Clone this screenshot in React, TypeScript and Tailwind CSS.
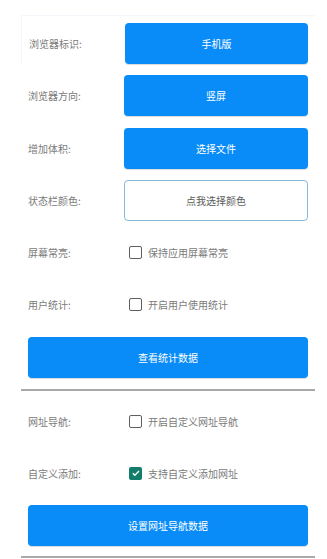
import { useState } from 'react'

const font = { fontFamily: '"Noto Sans CJK SC", "Noto Sans", sans-serif' }

function Label({ text }: { text: string }) {
  return <div className="w-[103px] shrink-0 pl-[7px] text-[10px] text-[#7a7a7a]">{text}</div>
}

function Btn({ text }: { text: string }) {
  return (
    <button className="h-[41px] flex-1 rounded-[4px] bg-[#0a8cf8] text-[10px] text-white shadow-[0_1px_1px_rgba(0,0,0,0.15)]">
      {text}
    </button>
  )
}

function Check({ text, on, toggle }: { text: string; on: boolean; toggle: () => void }) {
  return (
    <label className="ml-[5px] flex cursor-pointer items-center gap-[6px] text-[10px] text-[#7a7a7a]" onClick={toggle}>
      {on ? (
        <span className="flex h-[13px] w-[13px] items-center justify-center rounded-[2px] bg-[#137d6b]">
          <svg viewBox="0 0 12 12" className="h-[10px] w-[10px]">
            <path d="M2.2 6.2l2.4 2.4 5-5" fill="none" stroke="white" strokeWidth="1.7" />
          </svg>
        </span>
      ) : (
        <span className="h-[13px] w-[13px] rounded-[2px] border-[1.5px] border-[#5f5f5f]" />
      )}
      {text}
    </label>
  )
}

function Row({ children }: { children: React.ReactNode }) {
  return <div className="flex h-[41px] items-center pr-[7px]">{children}</div>
}

export default function App() {
  const [keepOn, setKeepOn] = useState(false)
  const [stats, setStats] = useState(false)
  const [nav, setNav] = useState(false)
  const [custom, setCustom] = useState(true)

  return (
    <div className="min-h-[559px] bg-white pl-[21px] pr-[12px] pt-[15px]" style={font}>
      <div className="flex flex-col gap-[11.3px] border-t border-[#f2f6fa]">
        <div className="border-l border-[#f2f6fa] pt-[7px]">
          <Row>
            <Label text="浏览器标识:" />
            <Btn text="手机版" />
          </Row>
        </div>
        <Row>
          <Label text="浏览器方向:" />
          <Btn text="竖屏" />
        </Row>
        <Row>
          <Label text="增加体积:" />
          <Btn text="选择文件" />
        </Row>
        <Row>
          <Label text="状态栏颜色:" />
          <button className="h-[41px] flex-1 rounded-[4px] border border-[#86b9d8] bg-white text-[10px] text-[#5a5a5a]">
            点我选择颜色
          </button>
        </Row>
        <Row>
          <Label text="屏幕常亮:" />
          <Check text="保持应用屏幕常亮" on={keepOn} toggle={() => setKeepOn(!keepOn)} />
        </Row>
        <Row>
          <Label text="用户统计:" />
          <Check text="开启用户使用统计" on={stats} toggle={() => setStats(!stats)} />
        </Row>
        <div className="flex px-[7px]">
          <Btn text="查看统计数据" />
        </div>
      </div>
      <div className="mt-[11px] h-[2px] bg-[#a9a9a9]" />
      <div className="flex flex-col gap-[11px] pt-[10px]">
        <Row>
          <Label text="网址导航:" />
          <Check text="开启自定义网址导航" on={nav} toggle={() => setNav(!nav)} />
        </Row>
        <Row>
          <Label text="自定义添加:" />
          <Check text="支持自定义添加网址" on={custom} toggle={() => setCustom(!custom)} />
        </Row>
        <div className="flex px-[7px]">
          <Btn text="设置网址导航数据" />
        </div>
      </div>
      <div className="mt-[10px] h-[2px] bg-[#a9a9a9]" />
    </div>
  )
}
